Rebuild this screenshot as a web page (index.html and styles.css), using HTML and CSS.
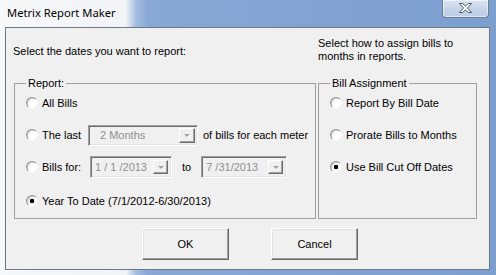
FILE: index.html
```html
<!DOCTYPE html>
<html lang="en">
<head>
  <meta charset="UTF-8" />
  <meta name="viewport" content="width=device-width, initial-scale=1.0"/>
  <title>Metrix Report Maker</title>
  <link rel="stylesheet" href="styles.css">
</head>
<body>
  <div class="window">
    <div class="titlebar">
      <span class="title">Metrix Report Maker</span>
      <button class="close" title="Close">
        <svg width="13" height="10" viewBox="0 0 13 10">
          <polygon points="0.5,0.5 3.8,0.5 6.5,3.2 9.2,0.5 12.5,0.5 8.5,5 12.5,9.5 9.2,9.5 6.5,6.8 3.8,9.5 0.5,9.5 4.5,5" fill="#fff" stroke="#4a586c" stroke-width="1" stroke-linejoin="round"/>
        </svg>
      </button>
    </div>

    <div class="client">
      <div class="header">
        <p class="intro">Select the dates you want to report:</p>
        <p class="hint">Select how to assign bills to<br>months in reports.</p>
      </div>

      <div class="groups">
        <fieldset class="group report">
          <legend>Report:</legend>
          <div class="row"><span class="radio"></span>All Bills</div>
          <div class="row">
            <span class="radio"></span><span class="label last">The last</span>
            <div class="combo months">
              <span class="value">2 Months</span>
              <span class="drop flush"><i class="arrow"></i></span>
            </div>
            <span class="after">of bills for each meter</span>
          </div>
          <div class="row">
            <span class="radio"></span><span class="label billsfor">Bills for:</span>
            <div class="combo date from">
              <span class="value">1 / 1 /2013</span>
              <span class="drop"><i class="arrow"></i></span>
            </div>
            <span class="to">to</span>
            <div class="combo date until">
              <span class="value">7 /31/2013</span>
              <span class="drop"><i class="arrow"></i></span>
            </div>
          </div>
          <div class="row ytd"><span class="radio on"></span>Year To Date (7/1/2012-6/30/2013)</div>
        </fieldset>

        <fieldset class="group assign">
          <legend>Bill Assignment</legend>
          <div class="row"><span class="radio"></span>Report By Bill Date</div>
          <div class="row"><span class="radio"></span>Prorate Bills to Months</div>
          <div class="row"><span class="radio on"></span>Use Bill Cut Off Dates</div>
        </fieldset>
      </div>

      <div class="buttons">
        <button class="btn">OK</button>
        <button class="btn">Cancel</button>
      </div>
    </div>
  </div>
</body>
</html>
```

FILE: styles.css
```css
body {
  margin: 0;
  font-family: 'Liberation Sans', Arial, sans-serif;
  font-size: 11px;
  color: #000;
}

.window {
  width: 496px;
  height: 275px;
  overflow: hidden;
  background: linear-gradient(90deg, #f7f8fa 0, #f1f3f6 126px, #a4bddf 136px, #87a7d4 148px, #7d9fd0 100%);
}

.titlebar {
  display: flex;
  align-items: flex-start;
  height: 27px;
}
.title {
  padding: 5px 0 0 7px;
  font-family: 'Noto Sans', sans-serif;
  font-size: 11.2px;
  line-height: 15px;
  color: #000;
}
.close {
  margin-left: auto;
  margin-right: 7px;
  width: 47px;
  height: 18px;
  padding: 0;
  border: 1px solid #6f7f97;
  border-top: none;
  border-radius: 0 0 4px 4px;
  background: linear-gradient(#dbe4f1, #c3d2e7 60%, #bccde4);
  box-shadow: inset 0 0 0 1px rgba(255, 255, 255, 0.5);
  display: flex;
  align-items: center;
  justify-content: center;
}
.close svg { display: block; margin-top: -1px; }

.client {
  margin-left: 5px;
  width: 485px;
  height: 243px;
  box-sizing: border-box;
  border: 1px solid #6c7888;
  background: #f0f0f0;
}

.header {
  display: flex;
  height: 49px;
  padding-left: 7px;
}
.header p {
  margin: 0;
  line-height: 13px;
}
.intro {
  width: 305px;
  padding-top: 17px;
}
.hint {
  padding-top: 9px;
}

.groups {
  display: flex;
  gap: 2px;
  padding-left: 8px;
}
.group {
  margin: 0;
  padding: 0 0 0 11px;
  min-inline-size: 0;
  box-sizing: border-box;
  height: 142px;
  border: 1px solid #a0a0a0;
}
.group legend {
  padding: 0 2px;
  line-height: 13px;
}
.report { width: 302px; }
.assign { width: 159px; }

.row {
  display: flex;
  align-items: center;
  height: 26px;
  white-space: nowrap;
}
.row + .row { margin-top: 6px; }
.row.ytd { margin-top: 8px; }

.radio {
  flex: none;
  width: 12px;
  height: 12px;
  margin-right: 4px;
  box-sizing: border-box;
  border-radius: 50%;
  border: 1px solid;
  border-color: #939393 #f4f4f4 #f4f4f4 #939393;
  box-shadow: inset 1px 1px 0 #c9c9c9;
  background: #fff;
}
.radio.on {
  background: radial-gradient(circle, #000 0 2px, #fff 2.6px);
}

.label.last { width: 46px; }
.label.billsfor { width: 48px; }

.combo {
  display: flex;
  align-items: center;
  box-sizing: border-box;
  height: 21px;
  border: 1px solid;
  border-color: #a0a0a0 #fff #fff #a0a0a0;
  box-shadow: inset 1px 1px 0 #6d6d6d, inset -1px -1px 0 #e3e3e3;
  background: #f0f0f0;
  color: #8f8f8f;
}
.combo .value { padding-left: 4px; }
.combo.months { width: 110px; }
.combo.months .value { padding-left: 11px; }
.combo.date { height: 22px; }
.combo.from { width: 82px; }
.combo.until { width: 86px; }

.drop {
  margin: 3px 3px 3px auto;
  align-self: stretch;
  width: 15px;
  box-sizing: border-box;
  border: 1px solid;
  border-color: #fff #6d6d6d #6d6d6d #fff;
  box-shadow: inset -1px -1px 0 #a0a0a0;
  background: #f0f0f0;
  display: flex;
  align-items: center;
  justify-content: center;
}
.drop.flush {
  margin: 2px 2px 2px auto;
  width: 16px;
}
.arrow {
  width: 0;
  height: 0;
  border-left: 3px solid transparent;
  border-right: 3px solid transparent;
  border-top: 3px solid #a0a0a0;
  filter: drop-shadow(1px 1px 0 #fff);
}

.after { margin-left: 5px; }
.to { margin: 0 10px 0 10px; }

.buttons {
  display: flex;
  gap: 42px;
  padding: 9px 0 0 136px;
}
.btn {
  width: 87px;
  height: 32px;
  padding: 0;
  box-sizing: border-box;
  border: 1px solid;
  border-color: #fff #696969 #696969 #fff;
  box-shadow: inset -1px -1px 0 #a0a0a0, inset 1px 1px 0 #e3e3e3;
  background: #f0f0f0;
  font-family: 'Liberation Sans', Arial, sans-serif;
  font-size: 11px;
  color: #000;
}
```
